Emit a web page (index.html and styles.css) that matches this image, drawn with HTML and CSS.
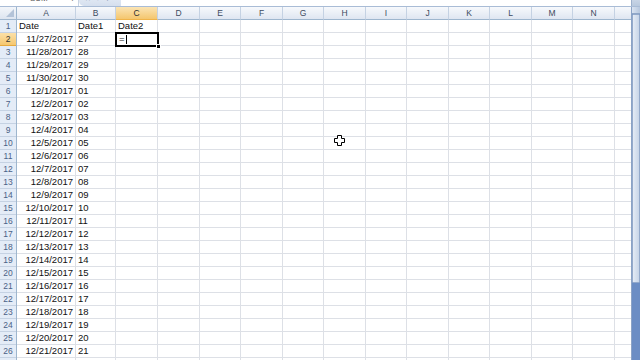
FILE: index.html
```html
<!DOCTYPE html>
<html>
<head>
<meta charset="utf-8">
<link rel="stylesheet" href="styles.css">
</head>
<body>
<div class="app">
  <div class="formula">
    <div class="fx-row">
      <div class="namebox"><span class="nm">SUM</span><span class="dd">▼</span></div>
      <div class="tools"><span>✕</span><span>✓</span><span class="fxg">fx</span></div>
      <div class="input">=</div>
      <div class="expand"></div>
    </div>
  </div>
  <div class="sheet">
    <div class="col rowhdr">
      <div class="corner"><svg width="16" height="12" viewBox="0 0 16 12"><polygon points="14,2 14,10 6,10" fill="#b3c3d8"/></svg></div>
      <div class="rn">1</div><div class="rn sel">2</div><div class="rn">3</div><div class="rn">4</div><div class="rn">5</div><div class="rn">6</div><div class="rn">7</div><div class="rn">8</div><div class="rn">9</div><div class="rn">10</div><div class="rn">11</div><div class="rn">12</div><div class="rn">13</div><div class="rn">14</div><div class="rn">15</div><div class="rn">16</div><div class="rn">17</div><div class="rn">18</div><div class="rn">19</div><div class="rn">20</div><div class="rn">21</div><div class="rn">22</div><div class="rn">23</div><div class="rn">24</div><div class="rn">25</div><div class="rn">26</div><div class="rn">27</div>
    </div>
    <div class="col w59">
      <div class="hd">A</div>
      <div class="c">Date</div>
      <div class="c r">11/27/2017</div><div class="c r">11/28/2017</div><div class="c r">11/29/2017</div><div class="c r">11/30/2017</div>
      <div class="c r">12/1/2017</div><div class="c r">12/2/2017</div><div class="c r">12/3/2017</div><div class="c r">12/4/2017</div><div class="c r">12/5/2017</div><div class="c r">12/6/2017</div><div class="c r">12/7/2017</div><div class="c r">12/8/2017</div><div class="c r">12/9/2017</div><div class="c r">12/10/2017</div><div class="c r">12/11/2017</div><div class="c r">12/12/2017</div><div class="c r">12/13/2017</div><div class="c r">12/14/2017</div><div class="c r">12/15/2017</div><div class="c r">12/16/2017</div><div class="c r">12/17/2017</div><div class="c r">12/18/2017</div><div class="c r">12/19/2017</div><div class="c r">12/20/2017</div><div class="c r">12/21/2017</div><div class="c r">12/22/2017</div>
    </div>
    <div class="col w40">
      <div class="hd">B</div>
      <div class="c">Date1</div>
      <div class="c">27</div><div class="c">28</div><div class="c">29</div><div class="c">30</div><div class="c">01</div><div class="c">02</div><div class="c">03</div><div class="c">04</div><div class="c">05</div><div class="c">06</div><div class="c">07</div><div class="c">08</div><div class="c">09</div><div class="c">10</div><div class="c">11</div><div class="c">12</div><div class="c">13</div><div class="c">14</div><div class="c">15</div><div class="c">16</div><div class="c">17</div><div class="c">18</div><div class="c">19</div><div class="c">20</div><div class="c">21</div><div class="c">22</div>
    </div>
    <div class="col w42">
      <div class="hd hsel">C</div>
      <div class="c">Date2</div>
      <div class="c edit">=<span class="caret"></span></div>
      <div class="body"></div>
    </div>
    <div class="col w42"><div class="hd">D</div><div class="body"></div></div>
    <div class="col w41"><div class="hd">E</div><div class="body"></div></div>
    <div class="col w42"><div class="hd">F</div><div class="body"></div></div>
    <div class="col w41"><div class="hd">G</div><div class="body"></div></div>
    <div class="col w42"><div class="hd">H</div><div class="body"></div></div>
    <div class="col w41"><div class="hd">I</div><div class="body"></div></div>
    <div class="col w42"><div class="hd">J</div><div class="body"></div></div>
    <div class="col w41"><div class="hd">K</div><div class="body"></div></div>
    <div class="col w42"><div class="hd">L</div><div class="body"></div></div>
    <div class="col w41"><div class="hd">M</div><div class="body"></div></div>
    <div class="col w42"><div class="hd">N</div><div class="body"></div></div>
    <div class="col w16 last"><div class="hd"></div><div class="body"></div></div>
    <div class="vscroll">
      <div class="split"></div>
      <div class="thumb"></div>
      <div class="track"></div>
    </div>
    <div class="selbox"><div class="handle"></div></div>
    <svg class="pointer" width="11" height="11" viewBox="0 0 11 11"><path d="M3.5 0.5h4v3h3v4h-3v3h-4v-3h-3v-4h3z" fill="#fff" stroke="#000" stroke-width="1"/></svg>
  </div>
</div>
</body>
</html>
```

FILE: styles.css
```css
* { box-sizing: border-box; }
html, body { margin: 0; padding: 0; background: #fff; }
body { width: 640px; height: 360px; overflow: hidden; font-family: "Liberation Sans", Arial, sans-serif; }
.app { width: 640px; height: 360px; overflow: hidden; }

.formula { height: 7px; overflow: hidden; background: #fff; border-bottom: 1px solid #a9bcd6; }
.fx-row { display: flex; height: 16px; margin-top: -10px; align-items: stretch; }
.namebox { width: 79px; display: flex; align-items: flex-end; padding-left: 30px; font-size: 8px; color: #555; border-right: 1px solid #c8d3e2; }
.namebox .nm { flex: 1; line-height: 15px; }
.namebox .dd { font-size: 5px; color: #222; line-height: 14px; padding-right: 3px; }
.tools { width: 42px; display: flex; gap: 5px; padding-left: 6px; align-items: flex-end; font-size: 7px; color: #7d8ea8; background: linear-gradient(#eef3fa, #d5dfee); border-radius: 0 0 0 5px; line-height: 15px; }
.tools .fxg { font-style: italic; font-family: "Liberation Serif", serif; }
.input { flex: 1; padding-left: 4px; font-size: 8px; color: #333; line-height: 15px; display: flex; align-items: flex-end; }
.expand { width: 9px; background: linear-gradient(#dfe7f2, #b9c9de); border-left: 1px solid #9cb0cc; }

.sheet { position: relative; display: flex; height: 353px; }
.col { flex: none; display: flex; flex-direction: column; border-right: 1px solid #dde0e6; }
.w59 { width: 59px; } .w40 { width: 40px; } .w42 { width: 42px; } .w41 { width: 41px; } .w16 { width: 16px; }
.col.last { border-right: none; }

.hd { height: 13px; flex: none; margin-right: -1px; background: linear-gradient(#f7f9fc, #dfe6f1); border-bottom: 1px solid #9eb6ce; border-right: 1px solid #c5d2e3; font-size: 8.5px; color: #3c4a5e; text-align: center; line-height: 12px; }
.hd.hsel { background: linear-gradient(#fbe4b4, #f4c66e); border-bottom-color: #f0b44a; color: #2d2d2d; }
.col.last .hd { margin-right: 0; border-right: none; }

.c { height: 13px; flex: none; border-bottom: 1px solid #dde0e6; font-size: 9.5px; color: #111; line-height: 12px; padding: 0 2px; white-space: nowrap; overflow: hidden; }
.c.r { text-align: right; }
.c.edit { display: flex; align-items: center; padding-left: 3px; }
.caret { display: inline-block; width: 1px; height: 9px; background: #000; margin-left: 1px; }
.body { flex: 1; background-image: repeating-linear-gradient(to bottom, transparent 0 12px, #dde0e6 12px 13px); }

.rowhdr { width: 17px; background: #e4ecf7; border-right: 1px solid #9eb6ce; }
.corner { height: 13px; flex: none; background: linear-gradient(#f3f6fa, #dde5f0); border-bottom: 1px solid #9eb6ce; }
.corner svg { display: block; }
.rn { height: 13px; flex: none; border-bottom: 1px solid #c5d2e3; font-size: 8.5px; color: #4a6286; text-align: center; line-height: 12px; }
.rn.sel { background: linear-gradient(#fbe0a8, #f5c76f); color: #333; border-bottom-color: #e6a93e; }

.vscroll { flex: none; width: 9px; display: flex; flex-direction: column; background: #6d8fc6; border-left: 1px solid #8ba3c6; }
.split { height: 7px; flex: none; background: linear-gradient(90deg, #d9e3f1, #b6c7de); border-bottom: 1px solid #8fa6c7; }
.thumb { height: 269px; flex: none; background: linear-gradient(90deg, #e4ebf5, #c7d5e8); border: 1px solid #94aacb; border-radius: 1px; }
.track { flex: 1; background: #6b8dc4; }

.selbox { position: absolute; left: 115px; top: 25px; width: 44px; height: 15px; border: 2px solid #000; }
.handle { position: absolute; right: -4px; bottom: -4px; width: 5px; height: 5px; background: #000; border: 1px solid #fff; }
.pointer { position: absolute; left: 334px; top: 128px; }
```
